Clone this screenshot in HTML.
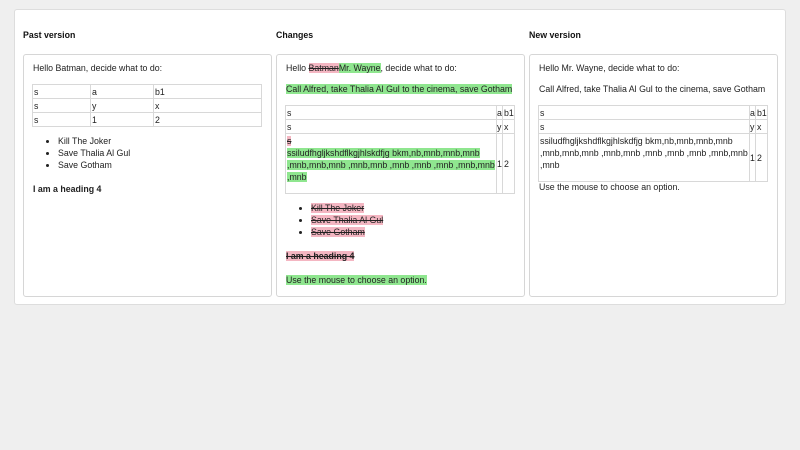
<!DOCTYPE html>
<html><head><style>
*{margin:0;padding:0;box-sizing:border-box}
body{width:800px;height:450px;background:#efefef;font-family:"Liberation Sans",Arial,sans-serif;font-size:8.8px;color:#222;position:relative;overflow:hidden}
.wrap{position:absolute;left:14px;top:9px;width:772px;height:296px;background:#fff;border:1px solid #ddd;border-radius:3px}
.h{position:absolute;top:29px;font-weight:bold;font-size:8.8px;color:#111;line-height:12px}
.p{position:absolute;top:54px;width:249px;height:243px;border:1px solid #d6d6d6;border-radius:3px;background:#fff}
.t{position:absolute;line-height:12px;white-space:nowrap}
table{position:absolute;border-collapse:collapse;font-size:8.8px;line-height:12px;table-layout:fixed}
td{border:1px solid #d8d8d8;padding:0 1px;vertical-align:middle;height:14px;white-space:nowrap;overflow:hidden}
.ins{background:#8fe68f}
.del{background:#f4b6c2;text-decoration:line-through}
ul{position:absolute;list-style:disc;line-height:12px;white-space:nowrap}
</style></head><body>
<div class="wrap"></div>
<div class="h" style="left:23px">Past version</div>
<div class="h" style="left:276px">Changes</div>
<div class="h" style="left:529px">New version</div>

<div class="p" style="left:23px"></div>
<div class="p" style="left:276px"></div>
<div class="p" style="left:529px"></div>

<!-- Past -->
<div class="t" style="left:33px;top:62px">Hello Batman, decide what to do:</div>
<table style="left:32px;top:84px;width:230px">
<tr><td style="width:58px">s</td><td style="width:63px">a</td><td>b1</td></tr>
<tr><td>s</td><td>y</td><td>x</td></tr>
<tr><td>s</td><td>1</td><td>2</td></tr>
</table>
<ul style="left:58px;top:135px"><li>Kill The Joker</li><li>Save Thalia Al Gul</li><li>Save Gotham</li></ul>
<div class="t" style="left:33px;top:183px;font-weight:bold">I am a heading 4</div>

<!-- Changes -->
<div class="t" style="left:286px;top:62px">Hello <span class="del">Batman</span><span class="ins">Mr. Wayne</span>, decide what to do:</div>
<div class="t" style="left:286px;top:83px"><span class="ins">Call Alfred, take Thalia Al Gul to the cinema, save Gotham</span></div>
<table style="left:285px;top:105px;width:230px">
<tr><td style="width:211px">s</td><td style="width:6px;padding:0">a</td><td>b1</td></tr>
<tr><td>s</td><td style="padding:0">y</td><td>x</td></tr>
<tr><td style="height:60px;vertical-align:top;padding-top:1px"><span class="del">s</span><br><span class="ins">ssiludfhgljkshdflkgjhlskdfjg bkm,nb,mnb,mnb,mnb<br>,mnb,mnb,mnb ,mnb,mnb ,mnb ,mnb ,mnb ,mnb,mnb<br>,mnb</span></td><td style="padding:0">1</td><td>2</td></tr>
</table>
<ul style="left:311px;top:202px"><li><span class="del">Kill The Joker</span></li><li><span class="del">Save Thalia Al Gul</span></li><li><span class="del">Save Gotham</span></li></ul>
<div class="t" style="left:286px;top:250px;font-weight:bold"><span class="del">I am a heading 4</span></div>
<div class="t" style="left:286px;top:274px"><span class="ins">Use the mouse to choose an option.</span></div>

<!-- New -->
<div class="t" style="left:539px;top:62px">Hello Mr. Wayne, decide what to do:</div>
<div class="t" style="left:539px;top:83px">Call Alfred, take Thalia Al Gul to the cinema, save Gotham</div>
<table style="left:538px;top:105px;width:230px">
<tr><td style="width:211px">s</td><td style="width:6px;padding:0">a</td><td>b1</td></tr>
<tr><td>s</td><td style="padding:0">y</td><td>x</td></tr>
<tr><td style="height:48px;vertical-align:top;padding-top:1px">ssiludfhgljkshdflkgjhlskdfjg bkm,nb,mnb,mnb,mnb<br>,mnb,mnb,mnb ,mnb,mnb ,mnb ,mnb ,mnb ,mnb,mnb<br>,mnb</td><td style="padding:0">1</td><td>2</td></tr>
</table>
<div class="t" style="left:539px;top:181px">Use the mouse to choose an option.</div>
</body></html>
